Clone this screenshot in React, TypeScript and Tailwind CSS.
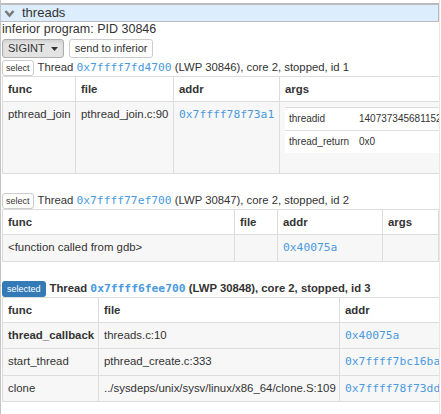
import React from "react";

const sans = "font-['Liberation_Sans',Arial,sans-serif]";
const mono = "font-['DejaVu_Sans_Mono',monospace] text-[#4a9ade] text-[11.3px]";

function Chevron() {
  return (
    <svg width="11" height="9" viewBox="0 0 11 9" className="shrink-0">
      <polyline points="1.5,2 5.5,6.5 9.5,2" fill="none" stroke="#7a7a7a" strokeWidth="2.6" />
    </svg>
  );
}

function ThreadLine({ selected, addr, lwp, id }: { selected?: boolean; addr: string; lwp: string; id: string }) {
  return (
    <div className={`flex items-center h-[16px] text-[11.3px] text-[#333] ${selected ? "font-bold" : ""}`}>
      {selected ? (
        <span className="h-[16px] px-[5px] ml-[1px] mr-[4px] rounded-[3px] bg-[#337ab7] text-white text-[9px] font-normal leading-[16px]">
          selected
        </span>
      ) : (
        <span className="h-[16px] px-[3px] ml-[1px] mr-[4px] rounded-[3px] border border-[#ccc] bg-white text-[9px] leading-[14px]">
          select
        </span>
      )}
      <span className="whitespace-nowrap">
        Thread <span className={`${mono} ${selected ? "font-bold" : ""}`}>{addr}</span> (LWP {lwp}), core 2, stopped, id {id}
      </span>
    </div>
  );
}

const th = "border border-[#ddd] px-[5px] py-[5px] text-left font-bold leading-[14px] align-top";
const td = "border border-[#ddd] px-[5px] py-[5px] leading-[15.6px] align-top";
const ntd = "border-t border-[#ddd] px-[4px] py-[3px] leading-[16px] text-[10px] whitespace-nowrap";

export default function App() {
  return (
    <div className={`${sans} w-[441px] h-[414px] overflow-hidden bg-white border-l border-[#c4c4c4] text-[#333]`}>
      <div className="w-[439px] overflow-hidden border-r border-[#e6e6e6] h-full">
        <div className="mt-[3px] h-[19px] w-[438px] flex items-center gap-[7px] pl-[3px] bg-[#dcedfd] border-t-2 border-b border-r border-[#bbb] text-[13px] text-[#333]">
          <Chevron />
          <span>threads</span>
        </div>
        <div className="h-[15px] leading-[15px] text-[12.5px] pl-[1px]">inferior program: PID 30846</div>
        <div className="flex gap-[5px] mt-[2px] ml-[1px] h-[19px]">
          <div className="flex items-center gap-[6px] px-[5px] rounded-[3px] border border-[#adadad] bg-[#e3e3e3] text-[11px] shadow-[inset_0_2px_3px_rgba(0,0,0,0.08)]">
            SIGINT
            <svg width="7" height="4" viewBox="0 0 7 4">
              <polygon points="0,0 7,0 3.5,4" fill="#333" />
            </svg>
          </div>
          <div className="flex items-center px-[5px] rounded-[3px] border border-[#ccc] bg-white text-[11px]">send to inferior</div>
        </div>
        <div className="mt-[2px]">
          <ThreadLine addr="0x7ffff7fd4700" lwp="30846" id="1" />
        </div>
        <table className="table-fixed border-collapse w-[470px] ml-[1px] text-[11.4px] mb-[19px]">
          <colgroup>
            <col className="w-[73px]" />
            <col className="w-[98px]" />
            <col className="w-[106px]" />
            <col />
          </colgroup>
          <thead>
            <tr>
              <th className={th}>func</th>
              <th className={th}>file</th>
              <th className={th}>addr</th>
              <th className={th}>args</th>
            </tr>
          </thead>
          <tbody>
            <tr className="bg-[#f7f7f7]">
              <td className={`${td} whitespace-nowrap`}>pthread_join</td>
              <td className={`${td} whitespace-nowrap`}>pthread_join.c:90</td>
              <td className={td}>
                <span className={mono}>0x7ffff78f73a1</span>
              </td>
              <td className={td}>
                <table className="table-fixed border-collapse bg-white w-[180px] mb-[15px]">
                  <colgroup>
                    <col className="w-[70px]" />
                    <col />
                  </colgroup>
                  <tbody>
                    <tr>
                      <td className={ntd}>threadid</td>
                      <td className={ntd}>140737345681152</td>
                    </tr>
                    <tr>
                      <td className={ntd}>thread_return</td>
                      <td className={ntd}>0x0</td>
                    </tr>
                  </tbody>
                </table>
              </td>
            </tr>
          </tbody>
        </table>

        <ThreadLine addr="0x7ffff77ef700" lwp="30847" id="2" />
        <table className="table-fixed border-collapse w-[437px] ml-[1px] text-[11.4px] mb-[19px]">
          <colgroup>
            <col className="w-[232px]" />
            <col className="w-[43px]" />
            <col className="w-[105px]" />
            <col />
          </colgroup>
          <thead>
            <tr>
              <th className={th}>func</th>
              <th className={th}>file</th>
              <th className={th}>addr</th>
              <th className={th}>args</th>
            </tr>
          </thead>
          <tbody>
            <tr className="bg-[#f7f7f7]">
              <td className={td}>&lt;function called from gdb&gt;</td>
              <td className={td}></td>
              <td className={td}>
                <span className={mono}>0x40075a</span>
              </td>
              <td className={td}></td>
            </tr>
          </tbody>
        </table>

        <ThreadLine selected addr="0x7ffff6fee700" lwp="30848" id="3" />
        <table className="table-fixed border-collapse w-[450px] ml-[1px] text-[11.4px]">
          <colgroup>
            <col className="w-[96px]" />
            <col className="w-[241px]" />
            <col />
          </colgroup>
          <thead>
            <tr>
              <th className={th}>func</th>
              <th className={th}>file</th>
              <th className={th}>addr</th>
            </tr>
          </thead>
          <tbody>
            {[
              ["thread_callback", "threads.c:10", "0x40075a", true],
              ["start_thread", "pthread_create.c:333", "0x7ffff7bc16ba", false],
              ["clone", "../sysdeps/unix/sysv/linux/x86_64/clone.S:109", "0x7ffff78f73dd", false],
            ].map(([f, file, a, bold]) => (
              <tr key={f as string} className="bg-[#f7f7f7]">
                <td className={`${td} whitespace-nowrap ${bold ? "font-bold" : ""}`}>{f}</td>
                <td className={`${td} whitespace-nowrap`}>{file}</td>
                <td className={`${td} whitespace-nowrap`}>
                  <span className={mono}>{a}</span>
                </td>
              </tr>
            ))}
          </tbody>
        </table>
      </div>
    </div>
  );
}
